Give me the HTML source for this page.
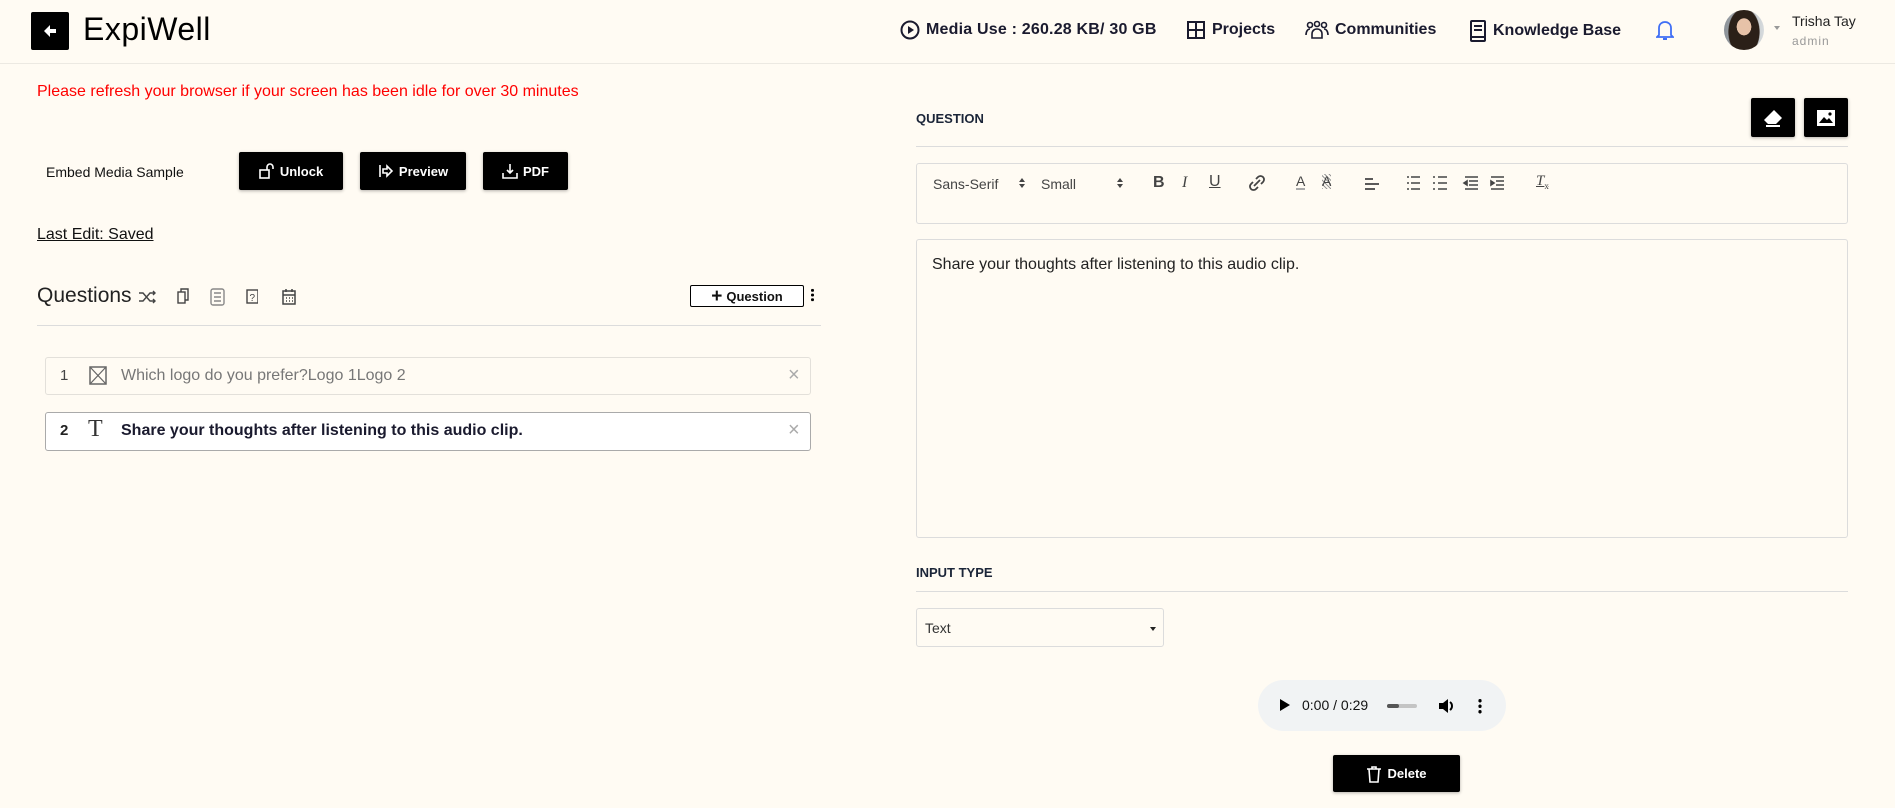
<!DOCTYPE html>
<html><head><meta charset="utf-8"><style>
*{box-sizing:border-box;margin:0;padding:0}
body{width:1895px;height:808px;background:#fffbf3;font-family:"Liberation Sans",sans-serif;color:#111;position:relative;overflow:hidden}
.a{position:absolute}
.hdr{left:0;top:0;width:1895px;height:64px;border-bottom:1px solid #ece9e2}
.nav{font-weight:bold;font-size:16px;color:#1a1a2e;top:20px;display:flex;align-items:center;gap:6px}
.btn{background:#000;color:#fff;font-weight:bold;font-size:13px;display:flex;align-items:center;justify-content:center;gap:5px;border-radius:2px;box-shadow:0 1px 3px rgba(0,0,0,.3)}
.lbl{font-weight:bold;font-size:13px;color:#1b2538}
.line{height:1px;background:#dcdcdc}
.box{border:1px solid #dcdcdc;background:#fffbf3;border-radius:3px}
.tb{font-size:14px;color:#444}
</style></head><body>
<div class="a hdr"></div>
<div class="a" style="left:31px;top:12px;width:38px;height:38px;background:#000;border-radius:2px"></div>
<svg class="a" style="left:42px;top:23px" width="16" height="16" viewBox="0 0 16 16"><path d="M8 2 L2 8 L8 14 L8 10 L14 10 L14 6 L8 6 Z" fill="#fff"/></svg>
<div class="a" style="left:83px;top:11px;font-size:32px;color:#000;letter-spacing:0.5px">ExpiWell</div>

<div class="a nav" style="left:900px;letter-spacing:0.2px"><svg width="20" height="20" viewBox="0 0 20 20"><circle cx="10" cy="10" r="8.5" fill="none" stroke="#1a1a2e" stroke-width="2"/><path d="M8 6 L14 10 L8 14Z" fill="#1a1a2e"/></svg>Media Use : 260.28 KB/ 30 GB</div>
<div class="a nav" style="left:1186px"><svg width="20" height="20" viewBox="0 0 20 20"><rect x="2" y="2" width="16" height="16" fill="none" stroke="#1a1a2e" stroke-width="2"/><path d="M10 2V18M2 10H18" stroke="#1a1a2e" stroke-width="2"/></svg>Projects</div>
<div class="a nav" style="left:1305px"><svg width="24" height="20" viewBox="0 0 24 20"><g fill="none" stroke="#1a1a2e" stroke-width="1.6"><circle cx="5" cy="5" r="2.5"/><circle cx="12" cy="4" r="2.5"/><circle cx="19" cy="5" r="2.5"/><path d="M1 15c0-4 2-6 4-6M23 15c0-4-2-6-4-6M7 18v-4c0-3 2-5 5-5s5 2 5 5v4z"/></g></svg>Communities</div>
<div class="a nav" style="left:1469px"><svg width="18" height="22" viewBox="0 0 18 22"><rect x="2" y="1" width="14" height="20" rx="1" fill="none" stroke="#1a1a2e" stroke-width="2"/><path d="M5 6H13M5 10H13M2 17H16" stroke="#1a1a2e" stroke-width="2"/></svg>Knowledge Base</div>
<svg class="a" style="left:1656px;top:19px" width="18" height="22" viewBox="0 0 18 22"><path d="M3 16V9c0-4 3-6 6-6s6 2 6 6v7l2 2H1z" fill="none" stroke="#3f6ef5" stroke-width="1.8"/><path d="M7 20h4" stroke="#3f6ef5" stroke-width="2"/></svg>
<div class="a" style="left:1724px;top:10px;width:40px;height:40px;border-radius:50%;background:radial-gradient(ellipse 30% 35% at 50% 42%,#e7c2a8 0 60%,transparent 62%),radial-gradient(ellipse 40% 60% at 50% 55%,#2b2018 0 95%,transparent 100%),linear-gradient(90deg,#8a9096,#d8dcde)"></div>
<div class="a" style="left:1774px;top:26px;width:0;height:0;border-left:3px solid transparent;border-right:3px solid transparent;border-top:4px solid #999"></div>
<div class="a" style="left:1792px;top:13px;font-size:14px;color:#222">Trisha Tay</div>
<div class="a" style="left:1792px;top:34px;font-size:12px;color:#999;letter-spacing:1px">admin</div>

<div class="a" style="left:37px;top:83px;font-size:16px;color:#f00">Please refresh your browser if your screen has been idle for over 30 minutes</div>
<div class="a" style="left:46px;top:164px;font-size:14px;color:#111">Embed Media Sample</div>
<div class="a btn" style="left:239px;top:152px;width:104px;height:38px"><svg width="16" height="16" viewBox="0 0 16 16"><rect x="1" y="7" width="9" height="8" fill="none" stroke="#fff" stroke-width="1.6"/><path d="M8 7V4a3 3 0 0 1 6 0v2" fill="none" stroke="#fff" stroke-width="1.6"/></svg>Unlock</div>
<div class="a btn" style="left:360px;top:152px;width:106px;height:38px"><svg width="16" height="16" viewBox="0 0 16 16"><path d="M2 2V14" stroke="#fff" stroke-width="1.6"/><path d="M5 6H9V3L14 8L9 13V10H5Z" fill="none" stroke="#fff" stroke-width="1.6"/></svg>Preview</div>
<div class="a btn" style="left:483px;top:152px;width:85px;height:38px"><svg width="16" height="16" viewBox="0 0 16 16"><path d="M8 1V10M5 7L8 10L11 7M1 10V15H15V10" fill="none" stroke="#fff" stroke-width="1.6"/></svg>PDF</div>
<div class="a" style="left:37px;top:226px;font-size:16px;text-decoration:underline;color:#111">Last Edit: Saved</div>

<div class="a" style="left:37px;top:284px;font-size:21px;color:#222">Questions</div>
<svg class="a" style="left:138px;top:287px" width="120" height="20" viewBox="0 0 120 20"><g fill="none" stroke="#444" stroke-width="1.4"><path d="M1 6H5L12 14H17M1 14H5L12 6H17M15 4L17 6L15 8M15 12L17 14L15 16"/><rect x="40" y="5" width="7" height="11"/><path d="M43 5V2H50V13H47"/><rect x="73" y="2" width="13" height="16" rx="2" stroke="#888"/><path d="M76 6H83M76 10H83M76 14H83" stroke="#888"/><rect x="109" y="3" width="11" height="13"/></g><text x="111.5" y="14" font-size="10" font-family="Liberation Sans" fill="#444">?</text></svg>
<svg class="a" style="left:281px;top:288px" width="16" height="18" viewBox="0 0 16 18"><rect x="2" y="3" width="12" height="13" fill="none" stroke="#444" stroke-width="1.5"/><path d="M2 7H14M5 1V4M11 1V4" stroke="#444" stroke-width="1.5"/><path d="M5 10h1M8 10h1M11 10h1M5 13h1M8 13h1M11 13h1" stroke="#444" stroke-width="1.5"/></svg>
<div class="a" style="left:690px;top:285px;width:114px;height:22px;border:1.5px solid #000;border-radius:2px;font-size:13px;font-weight:bold;display:flex;align-items:center;justify-content:center;gap:4px;background:#fff"><span style="font-size:19px;line-height:1">+</span>Question</div>
<div class="a" style="left:811px;top:288px;width:3px;height:14px;background:radial-gradient(circle,#000 1.4px,transparent 1.6px) 0 0/3px 4.7px"></div>
<div class="a line" style="left:37px;top:325px;width:784px"></div>

<div class="a box" style="left:45px;top:357px;width:766px;height:38px;border-color:#e3e0da"></div>
<div class="a" style="left:60px;top:367px;font-size:15px;color:#444">1</div>
<svg class="a" style="left:89px;top:366px" width="18" height="19" viewBox="0 0 18 19"><rect x="1" y="1" width="16" height="17" fill="none" stroke="#666" stroke-width="1.5"/><path d="M1 1L17 18M17 1L1 18" stroke="#666" stroke-width="1.2"/></svg>
<div class="a" style="left:121px;top:367px;font-size:16px;color:#777">Which logo do you prefer?Logo 1Logo 2</div>
<div class="a" style="left:788px;top:364px;font-size:20px;color:#aaa">×</div>

<div class="a box" style="left:45px;top:412px;width:766px;height:39px;border-color:#aaa;background:#fff"></div>
<div class="a" style="left:60px;top:422px;font-size:15px;font-weight:bold;color:#222">2</div>
<div class="a" style="left:88px;top:416px;font-size:24px;font-family:'Liberation Serif',serif;color:#333">T</div>
<div class="a" style="left:121px;top:422px;font-size:16px;font-weight:bold;color:#1a1a2e">Share your thoughts after listening to this audio clip.</div>
<div class="a" style="left:788px;top:419px;font-size:20px;color:#aaa">×</div>

<div class="a lbl" style="left:916px;top:111px">QUESTION</div>
<div class="a btn" style="left:1751px;top:98px;width:44px;height:39px"><svg width="22" height="20" viewBox="0 0 22 20"><path d="M12 2L20 10L14 16H6L2 12Z" fill="#fff"/><path d="M4 18H18" stroke="#fff" stroke-width="2"/></svg></div>
<div class="a btn" style="left:1804px;top:98px;width:44px;height:39px"><svg width="20" height="18" viewBox="0 0 20 18"><rect x="1" y="1" width="18" height="16" fill="#fff"/><path d="M3 14L8 8L11 11L13 9L17 14Z" fill="#000"/><circle cx="14" cy="5" r="1.6" fill="#000"/></svg></div>
<div class="a line" style="left:916px;top:146px;width:932px"></div>

<div class="a box" style="left:916px;top:163px;width:932px;height:61px"></div>
<div class="a tb" style="left:933px;top:176px">Sans-Serif</div>
<svg class="a" style="left:1019px;top:177px" width="6" height="12"><path d="M0 5L3 1L6 5ZM0 7L3 11L6 7Z" fill="#444"/></svg>
<div class="a tb" style="left:1041px;top:176px">Small</div>
<svg class="a" style="left:1117px;top:177px" width="6" height="12"><path d="M0 5L3 1L6 5ZM0 7L3 11L6 7Z" fill="#444"/></svg>
<div class="a tb" style="left:1153px;top:174px;font-weight:bold;font-size:16px">B</div>
<div class="a tb" style="left:1182px;top:174px;font-style:italic;font-size:16px;font-family:'Liberation Serif',serif">I</div>
<div class="a tb" style="left:1209px;top:173px;text-decoration:underline;font-size:16px">U</div>
<svg class="a" style="left:1249px;top:175px" width="16" height="16" viewBox="0 0 16 16"><g fill="none" stroke="#444" stroke-width="1.8"><path d="M7 4L9 2a3 3 0 0 1 5 5L12 9"/><path d="M9 12L7 14a3 3 0 0 1-5-5L4 7"/><path d="M5 11L11 5"/></g></svg>
<div class="a tb" style="left:1296px;top:174px;font-size:14px;border-bottom:2px solid #aaa;line-height:14px">A</div>
<div class="a tb" style="left:1322px;top:174px;font-size:14px;background:repeating-linear-gradient(45deg,#999 0 1px,transparent 1px 3px);line-height:15px">A</div>
<svg class="a" style="left:1364px;top:177px" width="16" height="14"><path d="M1 2H9M1 7H15M1 12H11" stroke="#444" stroke-width="1.8"/></svg>
<svg class="a" style="left:1406px;top:175px" width="72" height="16"><g stroke="#444" stroke-width="1.6"><path d="M5 2H14M5 8H14M5 14H14M1 2H3M1 8H3M1 14H3"/><path d="M32 2H41M32 8H41M32 14H41M27 2H29M27 8H29M27 14H29"/><path d="M59 2H72M63 6H72M63 10H72M59 14H72"/><path d="M58 8L61 6V10Z" fill="#444"/></g></svg>
<svg class="a" style="left:1490px;top:175px" width="15" height="16"><g stroke="#444" stroke-width="1.6"><path d="M1 2H14M6 6H14M6 10H14M1 14H14"/><path d="M1 6L4 8L1 10Z" fill="#444"/></g></svg>
<div class="a tb" style="left:1536px;top:173px;font-style:italic;font-size:15px;font-family:'Liberation Serif',serif;text-decoration:underline">T<sub style="font-size:9px;font-style:normal">x</sub></div>

<div class="a box" style="left:916px;top:239px;width:932px;height:299px"></div>
<div class="a" style="left:932px;top:256px;font-size:16px;color:#222">Share your thoughts after listening to this audio clip.</div>

<div class="a lbl" style="left:916px;top:565px">INPUT TYPE</div>
<div class="a line" style="left:916px;top:591px;width:932px"></div>
<div class="a box" style="left:916px;top:608px;width:248px;height:39px"></div>
<div class="a" style="left:925px;top:620px;font-size:14px;color:#333">Text</div>
<div class="a" style="left:1150px;top:627px;border-left:3px solid transparent;border-right:3px solid transparent;border-top:4px solid #222"></div>

<div class="a" style="left:1258px;top:680px;width:248px;height:51px;background:#f1f3f4;border-radius:26px"></div>
<svg class="a" style="left:1279px;top:698px" width="12" height="14"><path d="M1 1L11 7L1 13Z" fill="#000"/></svg>
<div class="a" style="left:1302px;top:697px;font-size:14px;color:#111">0:00 / 0:29</div>
<div class="a" style="left:1387px;top:704px;width:30px;height:4px;background:#c4c4c4;border-radius:2px"><div style="width:12px;height:4px;background:#555;border-radius:2px"></div></div>
<svg class="a" style="left:1438px;top:697px" width="18" height="18" viewBox="0 0 18 18"><path d="M1 6H5L10 2V16L5 12H1Z" fill="#000"/><path d="M12 5a5 5 0 0 1 0 8" fill="none" stroke="#000" stroke-width="2"/></svg>
<div class="a" style="left:1478px;top:698px;width:4px;height:16px;background:radial-gradient(circle,#000 1.6px,transparent 1.8px) 0 0/4px 5.5px"></div>

<div class="a btn" style="left:1333px;top:755px;width:127px;height:37px"><svg width="16" height="18" viewBox="0 0 16 18"><path d="M1 4H15M6 4V2H10V4M3 4L4 17H12L13 4" fill="none" stroke="#fff" stroke-width="1.6"/></svg>Delete</div>
</body></html>
